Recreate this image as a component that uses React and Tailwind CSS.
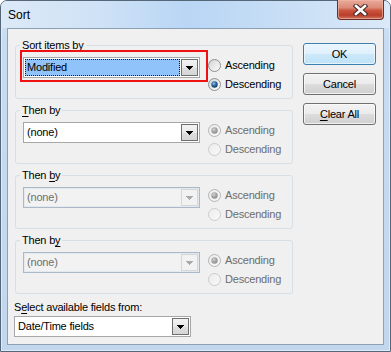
import React, { useId } from "react";

// crisp 7x4 drop-down arrow
const Arrow = ({ disabled }) => (
  <svg width="7" height="4" viewBox="0 0 7 4" shapeRendering="crispEdges">
    <path
      d="M0 0h7v1h-1v1h-1v1h-1v1h-1v-1h-1v-1h-1v-1h-1z"
      fill={disabled ? "#a9a9a9" : "#000"}
    />
  </svg>
);

const Combo = ({ value, disabled, focused }) => (
  <div
    className={
      disabled
        ? "flex h-[21px] w-[177px] items-stretch border border-[#aab8c7] bg-[#f2f2f2] shadow-[inset_0_0_0_1px_#e4e9ee]"
        : "flex h-[21px] w-[177px] items-stretch border border-[#a7a7a7] bg-white"
    }
  >
    <div className="flex flex-1 p-[1px]">
      {focused ? (
        <div className="flex flex-1 items-center border border-dotted border-[#1a1a1a] bg-[#8fc3f9] pl-[1px] text-black">
          {value}
        </div>
      ) : (
        <div
          className={
            disabled
              ? "flex flex-1 items-center pl-[2px] text-[#6d6d6d]"
              : "flex flex-1 items-center pl-[2px] text-black"
          }
        >
          {value}
        </div>
      )}
    </div>
    <div
      className={
        disabled
          ? "my-[1px] mr-[1px] flex w-[17px] items-center justify-center border border-[#d3d7dc] bg-[#f2f2f2]"
          : "my-[1px] mr-[1px] flex w-[17px] items-center justify-center border border-[#6f6f6f] bg-[linear-gradient(180deg,#f3f3f3_0%,#e9e9e9_50%,#dedede_51%,#d6d6d6_100%)]"
      }
    >
      <Arrow disabled={disabled} />
    </div>
  </div>
);

const Radio = ({ checked, disabled, children }) => {
  const id = useId().replace(/:/g, "");
  const ring = disabled ? (checked ? "#b3b3b3" : "#cbcbcb") : "#8e8f8f";
  return (
    <div
      className={
        disabled
          ? "flex h-[16px] items-center gap-[4px] text-[#6d6d6d]"
          : "flex h-[16px] items-center gap-[4px] text-black"
      }
    >
      <svg width="13" height="13" viewBox="0 0 13 13">
        <defs>
          <linearGradient id={`f${id}`} x1="0" y1="0" x2="1" y2="1">
            <stop offset="0" stopColor={disabled ? "#ececec" : "#d2d2d2"} />
            <stop offset="1" stopColor={disabled ? "#f8f8f8" : "#ffffff"} />
          </linearGradient>
          <radialGradient id={`d${id}`} cx="0.4" cy="0.35" r="0.7">
            <stop offset="0" stopColor={disabled ? "#d8d8d8" : "#9cc9f2"} />
            <stop offset="0.45" stopColor={disabled ? "#a9a9a9" : "#2f6aa3"} />
            <stop offset="1" stopColor={disabled ? "#8c8c8c" : "#14355c"} />
          </radialGradient>
        </defs>
        <circle cx="6.5" cy="6.5" r="6" fill={`url(#f${id})`} stroke={ring} />
        {checked && <circle cx="6.5" cy="6.5" r="3.2" fill={`url(#d${id})`} />}
      </svg>
      <span>{children}</span>
    </div>
  );
};

const Group = ({ legend, value, disabled, focused, ascending }) => (
  <fieldset className="h-[61px] rounded-[3px] border border-[#d5dfe5] px-[7px] pt-[5px]">
    <legend className="ml-[-3px] px-[2px] leading-[14px] text-black">{legend}</legend>
    <div className="flex items-start">
      <div className="relative">
        <Combo value={value} disabled={disabled} focused={focused} />
        {focused && (
          <span className="pointer-events-none absolute -top-[7px] -right-[8px] -bottom-[4px] -left-[3px] border-2 border-[#ee1111]" />
        )}
      </div>
      <div className="ml-[8px] flex flex-col gap-[3px]">
        <Radio checked={ascending} disabled={!focused}>
          Ascending
        </Radio>
        <Radio checked={!ascending} disabled={!focused}>
          Descending
        </Radio>
      </div>
    </div>
  </fieldset>
);

const Btn = ({ children, primary }) => (
  <button
    type="button"
    className={
      primary
        ? "flex h-[22px] w-[73px] items-center justify-center rounded-[3px] border border-[#3c7fb1] bg-[linear-gradient(180deg,#eaf6fd_0%,#dff1fc_50%,#cbe9fa_51%,#bfe2f7_100%)] text-black shadow-[inset_0_0_0_1px_#f4fbffb0]"
        : "flex h-[22px] w-[73px] items-center justify-center rounded-[3px] border border-[#707070] bg-[linear-gradient(180deg,#f2f2f2_0%,#ebebeb_50%,#dddddd_51%,#cfcfcf_100%)] text-black shadow-[inset_0_0_0_1px_#fbfbfbc0]"
    }
  >
    {children}
  </button>
);

const App = () => {
  return (
    <div className="h-[352px] w-[391px] bg-white font-['Liberation_Sans',Arial,sans-serif] text-[11px] tracking-[-0.2px]">
      <div className="flex h-[352px] w-[391px] flex-col rounded-t-[7px] border border-[#56677a] bg-[linear-gradient(180deg,#d6e7f8_0px,#c7dcf2_40px,#c2d7ee_100%)] shadow-[inset_0_0_0_1px_#e9f2fbb0]">
        <div className="flex h-[27px] items-start justify-between rounded-t-[6px] bg-[linear-gradient(90deg,#dce9f7_0%,#cfe2f6_25%,#b9d6f5_48%,#c6ddf5_70%,#dbe9f8_100%)] pl-[7px]">
          <span className="mt-[7px] text-[12px] leading-[14px] tracking-normal text-black">Sort</span>
          <div className="-mt-px mr-[6px] flex h-[20px] w-[47px] items-center justify-center rounded-b-[4px] border border-t-0 border-[#6a3027] bg-[linear-gradient(180deg,#e9aa9b_0%,#dc8a77_40%,#c9553f_55%,#b93e2a_80%,#cf7660_100%)] shadow-[inset_0_0_0_1px_#f0b8a8a0]">
            <svg width="15" height="12" viewBox="0 0 15 12">
              <path d="M3 2 L12 10 M12 2 L3 10" stroke="#4a2a26" strokeWidth="4.6" strokeLinecap="square" />
              <path d="M3 2 L12 10 M12 2 L3 10" stroke="#ffffff" strokeWidth="2.6" strokeLinecap="square" />
            </svg>
          </div>
        </div>
        <div className="mx-[6px] mb-[6px] flex flex-1 flex-col border border-[#8ca0b6] bg-[#f0f0f0] pt-[9px] pl-[7px] pr-[7px]">
          <div className="flex gap-[10px]">
            <div className="flex w-[278px] flex-col gap-[4px]">
              <Group
                legend={<><span className="underline underline-offset-[2px]">S</span>ort items by</>}
                value="Modified"
                focused
                ascending={false}
              />
              <Group
                legend={<><span className="underline underline-offset-[2px]">T</span>hen by</>}
                value="(none)"
                ascending
              />
              <Group
                legend={<>Then <span className="underline underline-offset-[2px]">b</span>y</>}
                value="(none)"
                disabled
                ascending
              />
              <Group
                legend={<>Then b<span className="underline underline-offset-[2px]">y</span></>}
                value="(none)"
                disabled
                ascending
              />
            </div>
            <div className="mt-[5px] flex w-[73px] flex-col gap-[8px]">
              <Btn primary>OK</Btn>
              <Btn>Cancel</Btn>
              <Btn>
                <span className="underline underline-offset-[2px]">C</span>lear All
              </Btn>
            </div>
          </div>
          <div className="ml-[-1px] mt-[6px] flex flex-col">
            <span className="leading-[14px] text-black">
              S<span className="underline underline-offset-[2px]">e</span>lect available fields from:
            </span>
            <div className="mt-[2px]">
              <Combo value="Date/Time fields" />
            </div>
          </div>
        </div>
      </div>
    </div>
  );
};

export default App;
